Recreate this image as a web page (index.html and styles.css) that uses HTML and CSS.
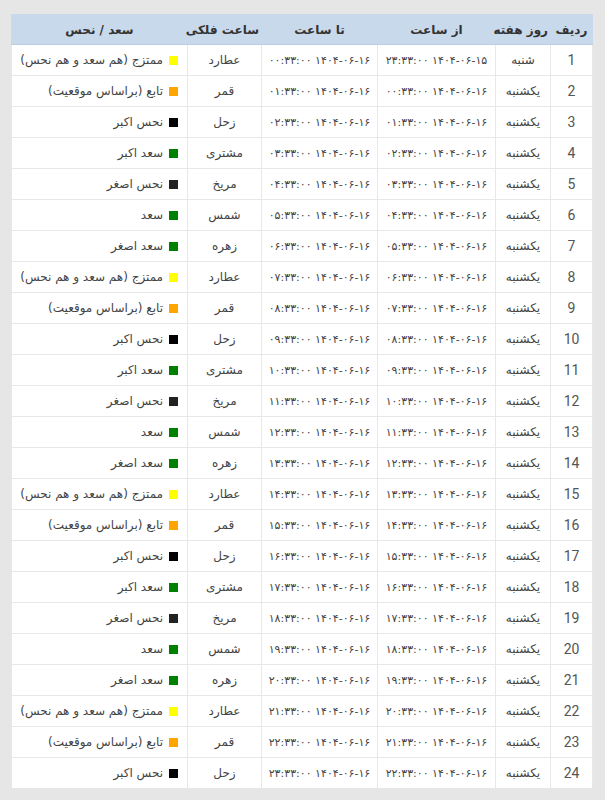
FILE: index.html
```html
<!DOCTYPE html>
<html lang="fa" dir="rtl">
<head>
<meta charset="utf-8">
<title>ساعات فلکی</title>
<link rel="stylesheet" href="styles.css">
</head>
<body>
<div class="page">
<table class="hours">
<colgroup>
<col class="c-idx"><col class="c-day"><col class="c-from"><col class="c-to"><col class="c-planet"><col class="c-state">
</colgroup>
<thead>
<tr><th>ردیف</th><th>روز هفته</th><th>از ساعت</th><th>تا ساعت</th><th>ساعت فلکی</th><th>سعد / نحس</th></tr>
</thead>
<tbody>
<tr><td class="idx">1</td><td>شنبه</td><td class="dt">۱۴۰۴-۰۶-۱۵ ۲۳:۳۳:۰۰</td><td class="dt">۱۴۰۴-۰۶-۱۶ ۰۰:۳۳:۰۰</td><td>عطارد</td><td class="state"><span class="sq mix"></span>ممتزج (هم سعد و هم نحس)</td></tr>
<tr><td class="idx">2</td><td>یکشنبه</td><td class="dt">۱۴۰۴-۰۶-۱۶ ۰۰:۳۳:۰۰</td><td class="dt">۱۴۰۴-۰۶-۱۶ ۰۱:۳۳:۰۰</td><td>قمر</td><td class="state"><span class="sq dep"></span>تابع (براساس موقعیت)</td></tr>
<tr><td class="idx">3</td><td>یکشنبه</td><td class="dt">۱۴۰۴-۰۶-۱۶ ۰۱:۳۳:۰۰</td><td class="dt">۱۴۰۴-۰۶-۱۶ ۰۲:۳۳:۰۰</td><td>زحل</td><td class="state"><span class="sq nbig"></span>نحس اکبر</td></tr>
<tr><td class="idx">4</td><td>یکشنبه</td><td class="dt">۱۴۰۴-۰۶-۱۶ ۰۲:۳۳:۰۰</td><td class="dt">۱۴۰۴-۰۶-۱۶ ۰۳:۳۳:۰۰</td><td>مشتری</td><td class="state"><span class="sq good"></span>سعد اکبر</td></tr>
<tr><td class="idx">5</td><td>یکشنبه</td><td class="dt">۱۴۰۴-۰۶-۱۶ ۰۳:۳۳:۰۰</td><td class="dt">۱۴۰۴-۰۶-۱۶ ۰۴:۳۳:۰۰</td><td>مریخ</td><td class="state"><span class="sq nsmall"></span>نحس اصغر</td></tr>
<tr><td class="idx">6</td><td>یکشنبه</td><td class="dt">۱۴۰۴-۰۶-۱۶ ۰۴:۳۳:۰۰</td><td class="dt">۱۴۰۴-۰۶-۱۶ ۰۵:۳۳:۰۰</td><td>شمس</td><td class="state"><span class="sq good"></span>سعد</td></tr>
<tr><td class="idx">7</td><td>یکشنبه</td><td class="dt">۱۴۰۴-۰۶-۱۶ ۰۵:۳۳:۰۰</td><td class="dt">۱۴۰۴-۰۶-۱۶ ۰۶:۳۳:۰۰</td><td>زهره</td><td class="state"><span class="sq good"></span>سعد اصغر</td></tr>
<tr><td class="idx">8</td><td>یکشنبه</td><td class="dt">۱۴۰۴-۰۶-۱۶ ۰۶:۳۳:۰۰</td><td class="dt">۱۴۰۴-۰۶-۱۶ ۰۷:۳۳:۰۰</td><td>عطارد</td><td class="state"><span class="sq mix"></span>ممتزج (هم سعد و هم نحس)</td></tr>
<tr><td class="idx">9</td><td>یکشنبه</td><td class="dt">۱۴۰۴-۰۶-۱۶ ۰۷:۳۳:۰۰</td><td class="dt">۱۴۰۴-۰۶-۱۶ ۰۸:۳۳:۰۰</td><td>قمر</td><td class="state"><span class="sq dep"></span>تابع (براساس موقعیت)</td></tr>
<tr><td class="idx">10</td><td>یکشنبه</td><td class="dt">۱۴۰۴-۰۶-۱۶ ۰۸:۳۳:۰۰</td><td class="dt">۱۴۰۴-۰۶-۱۶ ۰۹:۳۳:۰۰</td><td>زحل</td><td class="state"><span class="sq nbig"></span>نحس اکبر</td></tr>
<tr><td class="idx">11</td><td>یکشنبه</td><td class="dt">۱۴۰۴-۰۶-۱۶ ۰۹:۳۳:۰۰</td><td class="dt">۱۴۰۴-۰۶-۱۶ ۱۰:۳۳:۰۰</td><td>مشتری</td><td class="state"><span class="sq good"></span>سعد اکبر</td></tr>
<tr><td class="idx">12</td><td>یکشنبه</td><td class="dt">۱۴۰۴-۰۶-۱۶ ۱۰:۳۳:۰۰</td><td class="dt">۱۴۰۴-۰۶-۱۶ ۱۱:۳۳:۰۰</td><td>مریخ</td><td class="state"><span class="sq nsmall"></span>نحس اصغر</td></tr>
<tr><td class="idx">13</td><td>یکشنبه</td><td class="dt">۱۴۰۴-۰۶-۱۶ ۱۱:۳۳:۰۰</td><td class="dt">۱۴۰۴-۰۶-۱۶ ۱۲:۳۳:۰۰</td><td>شمس</td><td class="state"><span class="sq good"></span>سعد</td></tr>
<tr><td class="idx">14</td><td>یکشنبه</td><td class="dt">۱۴۰۴-۰۶-۱۶ ۱۲:۳۳:۰۰</td><td class="dt">۱۴۰۴-۰۶-۱۶ ۱۳:۳۳:۰۰</td><td>زهره</td><td class="state"><span class="sq good"></span>سعد اصغر</td></tr>
<tr><td class="idx">15</td><td>یکشنبه</td><td class="dt">۱۴۰۴-۰۶-۱۶ ۱۳:۳۳:۰۰</td><td class="dt">۱۴۰۴-۰۶-۱۶ ۱۴:۳۳:۰۰</td><td>عطارد</td><td class="state"><span class="sq mix"></span>ممتزج (هم سعد و هم نحس)</td></tr>
<tr><td class="idx">16</td><td>یکشنبه</td><td class="dt">۱۴۰۴-۰۶-۱۶ ۱۴:۳۳:۰۰</td><td class="dt">۱۴۰۴-۰۶-۱۶ ۱۵:۳۳:۰۰</td><td>قمر</td><td class="state"><span class="sq dep"></span>تابع (براساس موقعیت)</td></tr>
<tr><td class="idx">17</td><td>یکشنبه</td><td class="dt">۱۴۰۴-۰۶-۱۶ ۱۵:۳۳:۰۰</td><td class="dt">۱۴۰۴-۰۶-۱۶ ۱۶:۳۳:۰۰</td><td>زحل</td><td class="state"><span class="sq nbig"></span>نحس اکبر</td></tr>
<tr><td class="idx">18</td><td>یکشنبه</td><td class="dt">۱۴۰۴-۰۶-۱۶ ۱۶:۳۳:۰۰</td><td class="dt">۱۴۰۴-۰۶-۱۶ ۱۷:۳۳:۰۰</td><td>مشتری</td><td class="state"><span class="sq good"></span>سعد اکبر</td></tr>
<tr><td class="idx">19</td><td>یکشنبه</td><td class="dt">۱۴۰۴-۰۶-۱۶ ۱۷:۳۳:۰۰</td><td class="dt">۱۴۰۴-۰۶-۱۶ ۱۸:۳۳:۰۰</td><td>مریخ</td><td class="state"><span class="sq nsmall"></span>نحس اصغر</td></tr>
<tr><td class="idx">20</td><td>یکشنبه</td><td class="dt">۱۴۰۴-۰۶-۱۶ ۱۸:۳۳:۰۰</td><td class="dt">۱۴۰۴-۰۶-۱۶ ۱۹:۳۳:۰۰</td><td>شمس</td><td class="state"><span class="sq good"></span>سعد</td></tr>
<tr><td class="idx">21</td><td>یکشنبه</td><td class="dt">۱۴۰۴-۰۶-۱۶ ۱۹:۳۳:۰۰</td><td class="dt">۱۴۰۴-۰۶-۱۶ ۲۰:۳۳:۰۰</td><td>زهره</td><td class="state"><span class="sq good"></span>سعد اصغر</td></tr>
<tr><td class="idx">22</td><td>یکشنبه</td><td class="dt">۱۴۰۴-۰۶-۱۶ ۲۰:۳۳:۰۰</td><td class="dt">۱۴۰۴-۰۶-۱۶ ۲۱:۳۳:۰۰</td><td>عطارد</td><td class="state"><span class="sq mix"></span>ممتزج (هم سعد و هم نحس)</td></tr>
<tr><td class="idx">23</td><td>یکشنبه</td><td class="dt">۱۴۰۴-۰۶-۱۶ ۲۱:۳۳:۰۰</td><td class="dt">۱۴۰۴-۰۶-۱۶ ۲۲:۳۳:۰۰</td><td>قمر</td><td class="state"><span class="sq dep"></span>تابع (براساس موقعیت)</td></tr>
<tr><td class="idx">24</td><td>یکشنبه</td><td class="dt">۱۴۰۴-۰۶-۱۶ ۲۲:۳۳:۰۰</td><td class="dt">۱۴۰۴-۰۶-۱۶ ۲۳:۳۳:۰۰</td><td>زحل</td><td class="state"><span class="sq nbig"></span>نحس اکبر</td></tr>
</tbody>
</table>
</div>
</body>
</html>
```

FILE: styles.css
```css
html, body {
  margin: 0;
  padding: 0;
  background: #e6e6e6;
}
.page {
  padding: 14px 12px 10px 12px;
}
.hours {
  width: 581px;
  border-collapse: collapse;
  table-layout: fixed;
  direction: rtl;
  background: #ffffff;
  font-family: "DejaVu Sans", "Noto Sans", sans-serif;
  font-size: 12px;
  color: #444;
}
.c-idx { width: 42px; }
.c-day { width: 55px; }
.c-from { width: 118px; }
.c-to { width: 116px; }
.c-planet { width: 74px; }
.c-state { width: 176px; }
.hours th {
  background: #c9d9ec;
  color: #333;
  font-weight: bold;
  font-size: 12px;
  height: 29px;
  padding: 0 2px;
  text-align: center;
  white-space: nowrap;
  border: 1px solid #c9d9ec;
  border-bottom: 1px solid #bccde2;
}
.hours td {
  height: 30px;
  padding: 0 4px;
  text-align: center;
  border: 1px solid #e8e8e8;
  white-space: nowrap;
}
.hours td.dt {
  font-size: 11px;
  padding: 0 2px;
}
.hours td.idx {
  font-family: Roboto, "Liberation Sans", sans-serif;
  font-size: 14px;
  color: #555;
}
.hours td.state {
  text-align: right;
  padding-right: 9px;
}
.sq {
  display: inline-block;
  width: 9px;
  height: 9px;
  margin-left: 6px;
  vertical-align: middle;
}
.mix { background: #ffff00; }
.dep { background: #ffa500; }
.nbig { background: #000000; }
.nsmall { background: #222222; }
.good { background: #008000; }
```
